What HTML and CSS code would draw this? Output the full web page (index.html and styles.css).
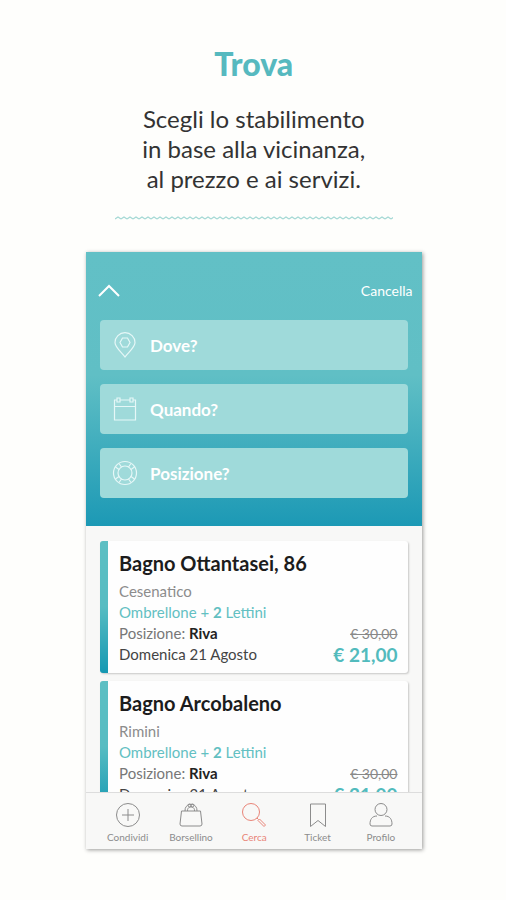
FILE: index.html
```html
<!DOCTYPE html>
<html lang="it">
<head>
<meta charset="utf-8">
<meta name="viewport" content="width=device-width, initial-scale=1">
<title>Trova</title>
<link rel="stylesheet" href="styles.css">
</head>
<body>
<main class="page">
  <header class="intro">
    <h1 class="intro-title">Trova</h1>
    <p class="intro-text">Scegli lo stabilimento<br>in base alla vicinanza,<br>al prezzo e ai servizi.</p>
    <svg class="wave" height="4" aria-hidden="true">
      <defs>
        <pattern id="zigzag" width="6" height="4" patternUnits="userSpaceOnUse">
          <path d="M0 3 L3 1 L6 3" fill="none" stroke="#a3d8d4" stroke-width="1.2"/>
        </pattern>
      </defs>
      <rect width="100%" height="4" fill="url(#zigzag)"/>
    </svg>
  </header>

  <section class="phone">
    <form class="search">
      <div class="search-bar">
        <button class="collapse" type="button" aria-label="Chiudi">
          <svg width="22" height="13" viewBox="0 0 22 13"><path d="M1 12 L11 2 L21 12"/></svg>
        </button>
        <button class="cancel" type="reset">Cancella</button>
      </div>
      <label class="field">
        <svg width="26" height="26" viewBox="0 0 26 26"><path d="M13 25 C10 20.500 3 15.500 3 10.500 A10 9.800 0 0 1 23 10.500 C23 15.500 16 20.500 13 25 Z"/><path d="M10.500 6 H15.500 L18 10.500 L15.500 15 H10.500 L8 10.500 Z"/></svg>
        <input type="text" placeholder="Dove?" aria-label="Dove?">
      </label>
      <label class="field">
        <svg width="26" height="26" viewBox="0 0 26 26"><path d="M5 4 H2.500 V24 H23.500 V4 H21 M8 4 H18 M2.500 10.500 H23.500"/><path d="M5 2 H8 V6 H5 Z M18 2 H21 V6 H18 Z"/></svg>
        <input type="text" placeholder="Quando?" aria-label="Quando?">
      </label>
      <label class="field">
        <svg width="26" height="26" viewBox="0 0 26 26"><circle cx="13" cy="13" r="11.500"/><circle cx="13" cy="13" r="7"/><path d="M7 3.500 L9.500 7 M3.500 7 L7 9.500 M19 3.500 L16.500 7 M22.500 7 L19 9.500 M7 22.500 L9.500 19 M3.500 19 L7 16.500 M19 22.500 L16.500 19 M22.500 19 L19 16.500"/></svg>
        <input type="text" placeholder="Posizione?" aria-label="Posizione?">
      </label>
    </form>

    <div class="results">
      <article class="card">
        <h2 class="card-title">Bagno Ottantasei, 86</h2>
        <div class="card-body">
          <div class="details">
            <p class="muted">Cesenatico</p>
            <p class="offer">Ombrellone + <b>2</b> Lettini</p>
            <p class="position">Posizione: <b>Riva</b></p>
            <p>Domenica 21 Agosto</p>
          </div>
          <div class="prices">
            <s class="old-price">€ 30,00</s>
            <strong class="price">€ 21,00</strong>
          </div>
        </div>
      </article>
      <article class="card">
        <h2 class="card-title">Bagno Arcobaleno</h2>
        <div class="card-body">
          <div class="details">
            <p class="muted">Rimini</p>
            <p class="offer">Ombrellone + <b>2</b> Lettini</p>
            <p class="position">Posizione: <b>Riva</b></p>
            <p>Domenica 21 Agosto</p>
          </div>
          <div class="prices">
            <s class="old-price">€ 30,00</s>
            <strong class="price">€ 21,00</strong>
          </div>
        </div>
      </article>
    </div>

    <nav class="tabs">
      <a class="tab" href="#condividi">
        <svg width="26" height="26" viewBox="0 0 26 26"><circle cx="13" cy="13" r="11.500"/><path d="M13 7 V19 M7 13 H19"/></svg>
        Condividi
      </a>
      <a class="tab" href="#borsellino">
        <svg width="26" height="26" viewBox="0 0 26 26"><path d="M3.500 9 H22.500 L24 22 Q24 24 22 24 H4 Q2 24 2 22 Z"/><path d="M7 9 C6.500 0 19.500 0 19 9 M9.500 9 C9 3.500 17 3.500 16.500 9"/><circle cx="11.500" cy="3.500" r="1.500"/><circle cx="14.500" cy="3.500" r="1.500"/></svg>
        Borsellino
      </a>
      <a class="tab active" href="#cerca" aria-current="page">
        <svg width="26" height="26" viewBox="0 0 26 26"><circle cx="10" cy="10" r="8.500"/><path d="M16 16 L17.500 17.500 M17 18.500 L18.500 17 L24.500 23 L23 24.500 Z"/></svg>
        Cerca
      </a>
      <a class="tab" href="#ticket">
        <svg width="26" height="26" viewBox="0 0 26 26"><path d="M5.500 2 H20.500 V24.500 L13 18.500 L5.500 24.500 Z"/></svg>
        Ticket
      </a>
      <a class="tab" href="#profilo">
        <svg width="26" height="26" viewBox="0 0 26 26"><circle cx="13" cy="7.500" r="6"/><path d="M9 14 C4 14 2 17.500 2 22 Q2 24 4 24 H22 Q24 24 24 22 C24 17.500 22 14 17 14"/></svg>
        Profilo
      </a>
    </nav>
  </section>
</main>
</body>
</html>
```
FILE: styles.css
```css
* {
  box-sizing: border-box;
}

body {
  margin: 0;
  background: #fefefc;
  color: #444;
  font-family: Lato, "Open Sans", sans-serif;
}

h1, h2, p {
  margin: 0;
}

svg {
  display: block;
  flex: none;
}

button {
  padding: 0;
  border: 0;
  background: none;
  color: inherit;
  font: inherit;
}

.page {
  padding: 45px 16.7% 40px 17%;
}

.intro {
  display: flex;
  flex-direction: column;
  align-items: center;
  text-align: center;
}

.intro-title {
  color: #56b9bf;
  font-size: 32px;
  font-weight: 900;
  line-height: 38px;
}

.intro-text {
  margin-top: 21px;
  color: #333;
  font-size: 24px;
  line-height: 30px;
  white-space: nowrap;
}

.wave {
  width: 83%;
  margin-top: 22px;
}

.phone {
  display: flex;
  flex-direction: column;
  aspect-ratio: 335 / 596;
  margin-top: 32px;
  overflow: hidden;
  background: #f8f8f7;
  box-shadow: 1px 1px 4px rgba(0, 0, 0, 0.4);
}

.search {
  display: flex;
  flex-direction: column;
  gap: 14px;
  padding: 22px 14px 28px;
  background: linear-gradient(#62c0c6 0%, #60bfc5 45%, #1c99b5 100%);
  color: #fff;
}

.search-bar {
  display: flex;
  justify-content: space-between;
  align-items: center;
  height: 32px;
  margin: 0 -5px 0 -2px;
}

.collapse svg {
  fill: none;
  stroke: #fff;
  stroke-width: 2;
}

.cancel {
  font-size: 14px;
}

.field {
  display: flex;
  align-items: center;
  gap: 12px;
  height: 50px;
  padding: 0 12px;
  border-radius: 4px;
  background: #9fdada;
}

.field svg {
  fill: none;
  stroke: #e6f7f7;
  stroke-width: 1.2;
}

.field input {
  flex: 1;
  min-width: 0;
  padding: 0;
  border: 0;
  outline: 0;
  background: none;
  color: #fff;
  font: 700 17px Lato, "Open Sans", sans-serif;
}

.field input::placeholder {
  color: #fff;
  opacity: 1;
}

.results {
  display: flex;
  flex: 1;
  flex-direction: column;
  gap: 8px;
  min-height: 0;
  padding: 15px 14px 0;
  overflow: hidden;
}

.card {
  flex: none;
  padding: 9px 10px 8px 19px;
  border-radius: 3px;
  background:
    linear-gradient(#5cbfc3 0%, #56bcc2 50%, #1598b2 100%) left / 8px 100% no-repeat,
    #fefefe;
  box-shadow: 1px 1px 2px rgba(0, 0, 0, 0.2);
}

.card-title {
  color: #1c1c1c;
  font-size: 20px;
  line-height: 26px;
}

.card-body {
  display: flex;
  justify-content: space-between;
  align-items: flex-end;
  margin-top: 5px;
  font-size: 15px;
  line-height: 21px;
}

.muted {
  color: #8c8c8c;
}

.offer {
  color: #62c0c2;
}

.position {
  color: #777;
}

.position b {
  color: #222;
}

.prices {
  display: flex;
  flex-direction: column;
  align-items: flex-end;
}

.old-price {
  color: #888;
  font-size: 14px;
}

.price {
  color: #52bbbd;
  font-size: 19px;
}

.tabs {
  display: grid;
  grid-template-columns: repeat(5, 1fr);
  padding: 9px 9px 6px 10px;
  border-top: 1px solid #ddd;
}

.tab {
  display: flex;
  flex-direction: column;
  align-items: center;
  gap: 3px;
  color: #8c8c8c;
  font-size: 10px;
  line-height: 12px;
  text-decoration: none;
}

.tab svg {
  fill: none;
  stroke: currentColor;
  stroke-width: 1;
}

.tab.active {
  color: #e98478;
}
```
